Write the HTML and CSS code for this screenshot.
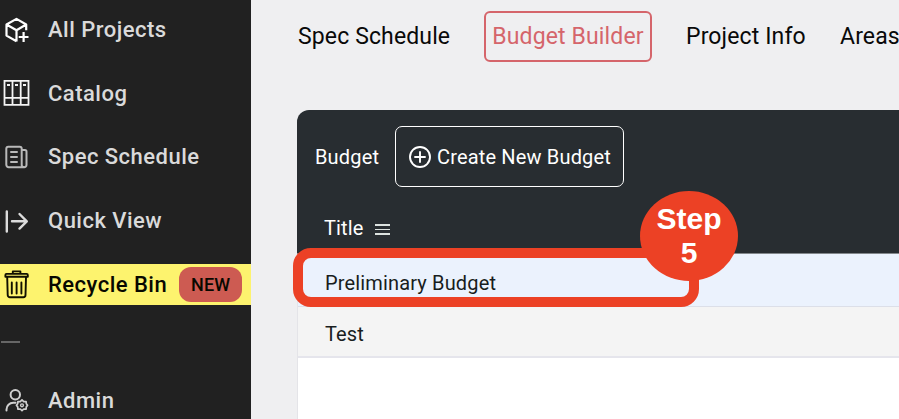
FILE: index.html
```html
<!DOCTYPE html>
<html lang="en">
<head>
<meta charset="utf-8">
<title>Budget Builder</title>
<link rel="stylesheet" href="styles.css">
</head>
<body>
<div class="app">
  <aside class="sidebar">
    <a class="item">
      <svg class="icon" viewBox="0 0 32 40" fill="none" stroke="#fff" stroke-width="2.200" stroke-linejoin="round"><path d="M16.500 31.300 6.500 25.600V14.500L16.500 8.900l9.700 5.600v5.700M6.500 14.500l10 5.700 9.700-5.700M16.500 20.200v11.300M23.600 22v10M18.700 27h9.800"/></svg>
      <span class="label">All Projects</span>
    </a>
    <a class="item">
      <svg class="icon" viewBox="0 0 32 40" fill="none" stroke="#f4f4f4" stroke-width="1.800"><path d="M4.500 7.800h24v24h-24zM12.500 7.800v24M20.700 7.800v24M4.500 24.800h24M7 12h3M15 12h3M23 12h3"/></svg>
      <span class="label">Catalog</span>
    </a>
    <a class="item">
      <svg class="icon" viewBox="0 0 32 40" fill="none" stroke="#b9b9b9" stroke-width="2" stroke-linecap="round" stroke-linejoin="round"><path d="M21.700 28.500V11.800a2 2 0 0 0-2-2H8.300a2 2 0 0 0-2 2v16a2.400 2.400 0 0 0 2.400 2.400h15.500a2.300 2.300 0 0 0 2.300-2.300V14.500a1.600 1.600 0 0 0-1.600-1.600h-3.200M11 15h6M11 20h6M11 25h6M21.700 28a2 2 0 0 0 2 2"/></svg>
      <span class="label">Spec Schedule</span>
    </a>
    <a class="item">
      <svg class="icon" viewBox="0 0 32 40" fill="none" stroke="#dcdcdc" stroke-width="2.400" stroke-linecap="round" stroke-linejoin="round"><path d="M6.800 10.500v20M12 20.300h14.500M19.500 13l7.300 7.300-7.300 7.300"/></svg>
      <span class="label">Quick View</span>
    </a>
    <a class="item item-new">
      <svg class="icon" viewBox="0 0 32 40" fill="none" stroke="#111000" stroke-width="1.900" stroke-linecap="round" stroke-linejoin="round"><path d="M12.800 9.500V7.400h7.600v2.100M6.500 9.900h20.200a1.100 1.100 0 0 1 1.100 1.100v1.800H5.400v-1.800a1.100 1.100 0 0 1 1.100-1.100zM7.200 13l.5 18a2.200 2.200 0 0 0 2.200 2.200h13.400a2.200 2.200 0 0 0 2.200-2.200l.5-18M11.800 18.500v11M16.600 18.500v11M21.400 18.500v11"/></svg>
      <span class="label">Recycle Bin</span>
      <span class="badge">NEW</span>
    </a>
    <div class="divider"></div>
    <a class="item item-admin">
      <svg class="icon" viewBox="0 0 32 40" fill="none" stroke="#d0d0d0" stroke-width="2" stroke-linecap="round" stroke-linejoin="round"><circle cx="15.300" cy="14.800" r="4.700"/><path d="M6.500 30.500v-1a6.700 6.700 0 0 1 6.700-6.700h2.300"/><path stroke-width="1.700" d="M22 19.900l1.700 1.700 2.400-.1.200 2.200 1.300 1.600-1.300 1.600-.2 2.200-2.400-.1-1.700 1.700-1.700-1.700-2.400.1-.2-2.200-1.300-1.600 1.300-1.600.2-2.200 2.400.1z"/><circle cx="22" cy="25.300" r="1.400" stroke-width="1.400"/></svg>
      <span class="label">Admin</span>
    </a>
  </aside>
  <main class="main">
    <nav class="tabs">
      <a class="tab tab-spec">Spec Schedule</a>
      <a class="tab tab-active">Budget Builder</a>
      <a class="tab tab-info">Project Info</a>
      <a class="tab">Areas</a>
    </nav>
    <section class="panel">
      <header class="panel-head">
        <div class="toolbar">
          <span class="toolbar-title">Budget</span>
          <button class="create">
            <svg class="plus" viewBox="0 0 24 24" fill="none" stroke="#fff" stroke-width="1.900" stroke-linecap="round"><circle cx="12" cy="12" r="10"/><path d="M12 7v10M7 12h10"/></svg>
            <span>Create New Budget</span>
          </button>
        </div>
        <div class="column-head">
          <span>Title</span>
          <span class="menu"></span>
        </div>
      </header>
      <div class="row row-selected">Preliminary Budget</div>
      <div class="row row-alt">Test</div>
      <div class="highlight"></div>
      <div class="step">Step<br>5</div>
    </section>
  </main>
</div>
</body>
</html>
```
FILE: styles.css
```css
* { box-sizing: border-box; }

body {
  margin: 0;
  width: 899px;
  height: 419px;
  overflow: hidden;
  background: #efeff1;
  font-family: Roboto, "Liberation Sans", sans-serif;
}

.app { display: flex; height: 419px; }

.sidebar {
  flex: none;
  display: flex;
  flex-direction: column;
  width: 251px;
  padding-top: 9px;
  background: #212121;
}

.item {
  display: flex;
  flex: none;
  align-items: center;
  height: 41px;
  margin-bottom: 22.700px;
  color: #dadada;
  font-size: 22px;
  font-weight: 500;
  letter-spacing: 0.480px;
  white-space: nowrap;
}

.icon { flex: none; width: 32px; height: 40px; margin-right: 16px; }

.item-new { margin-bottom: 0; background: #fdf36e; color: #080800; }

.badge {
  width: 63px;
  height: 35px;
  margin-left: 12px;
  border-radius: 12px;
  background: #cd5b52;
  font-size: 18px;
  letter-spacing: 0.100px;
  line-height: 35px;
  text-align: center;
}

.divider {
  flex: none;
  width: 19px;
  height: 2px;
  margin: 36px 0 37px 1px;
  background: #666;
}

.item-admin { margin-bottom: 0; }

.main { flex: 1; min-width: 0; padding: 11px 0 0 47px; }

.tabs {
  display: flex;
  height: 51px;
  line-height: 52px;
  color: #090909;
  font-size: 23px;
  letter-spacing: 0.130px;
  white-space: nowrap;
}

.tab { flex: none; }
.tab-spec { width: 186px; }

.tab-active {
  width: 168px;
  margin-right: 34px;
  border: 2px solid #d5656b;
  border-radius: 6px;
  color: #d5656b;
  line-height: 48px;
  text-align: center;
}

.tab-info { width: 154px; }

.panel {
  position: relative;
  height: 309px;
  margin: 48px 0 0 -1px;
  border-left: 1px solid #e4e4e8;
  border-top-left-radius: 12px;
  background: #fff;
}

.panel-head {
  height: 144px;
  margin-left: -1px;
  padding: 16px 0 0 18px;
  border-bottom: 1px solid #82878b;
  border-top-left-radius: 12px;
  background: #282d31;
  color: #fff;
}

.toolbar { display: flex; align-items: center; font-size: 20px; letter-spacing: 0.160px; }
.toolbar-title { width: 80px; }

.create {
  display: flex;
  align-items: center;
  width: 229px;
  height: 61px;
  padding: 0 0 0 12px;
  border: 1px solid #fff;
  border-radius: 7px;
  background: none;
  color: inherit;
  font: inherit;
  letter-spacing: inherit;
  white-space: nowrap;
}

.plus { flex: none; width: 24px; height: 24px; margin-right: 5px; }

.column-head {
  display: flex;
  align-items: center;
  height: 28px;
  margin: 27px 0 0 9px;
  font-size: 20px;
  letter-spacing: 0.150px;
}

.menu {
  width: 15px;
  height: 11px;
  margin: 3px 0 0 11px;
  background: linear-gradient(#dce2df 2px, transparent 2px 5px, #dce2df 5px 6px, transparent 6px 9px, #dce2df 9px);
}

.row {
  height: 52px;
  padding-left: 27px;
  border-bottom: 1px solid #dcdfe8;
  color: #181d20;
  font-size: 20px;
  letter-spacing: 0.150px;
  line-height: 59px;
}

.row-selected { height: 53px; background: #ebf2fd; }
.row-alt { height: 51px; border-bottom: 2px solid #e5e5ec; background: #f4f4f4; line-height: 54px; }

.highlight {
  position: absolute;
  left: -5px;
  top: 138px;
  width: 406px;
  height: 59px;
  border: 10px solid #ec4125;
  border-radius: 18px;
}

.step {
  position: absolute;
  left: 342px;
  top: 81px;
  width: 98px;
  height: 90px;
  padding-top: 11px;
  border-radius: 50%;
  background: #ec4125;
  color: #fff;
  font: bold 30px/34px "Liberation Sans", sans-serif;
  text-align: center;
}
```
